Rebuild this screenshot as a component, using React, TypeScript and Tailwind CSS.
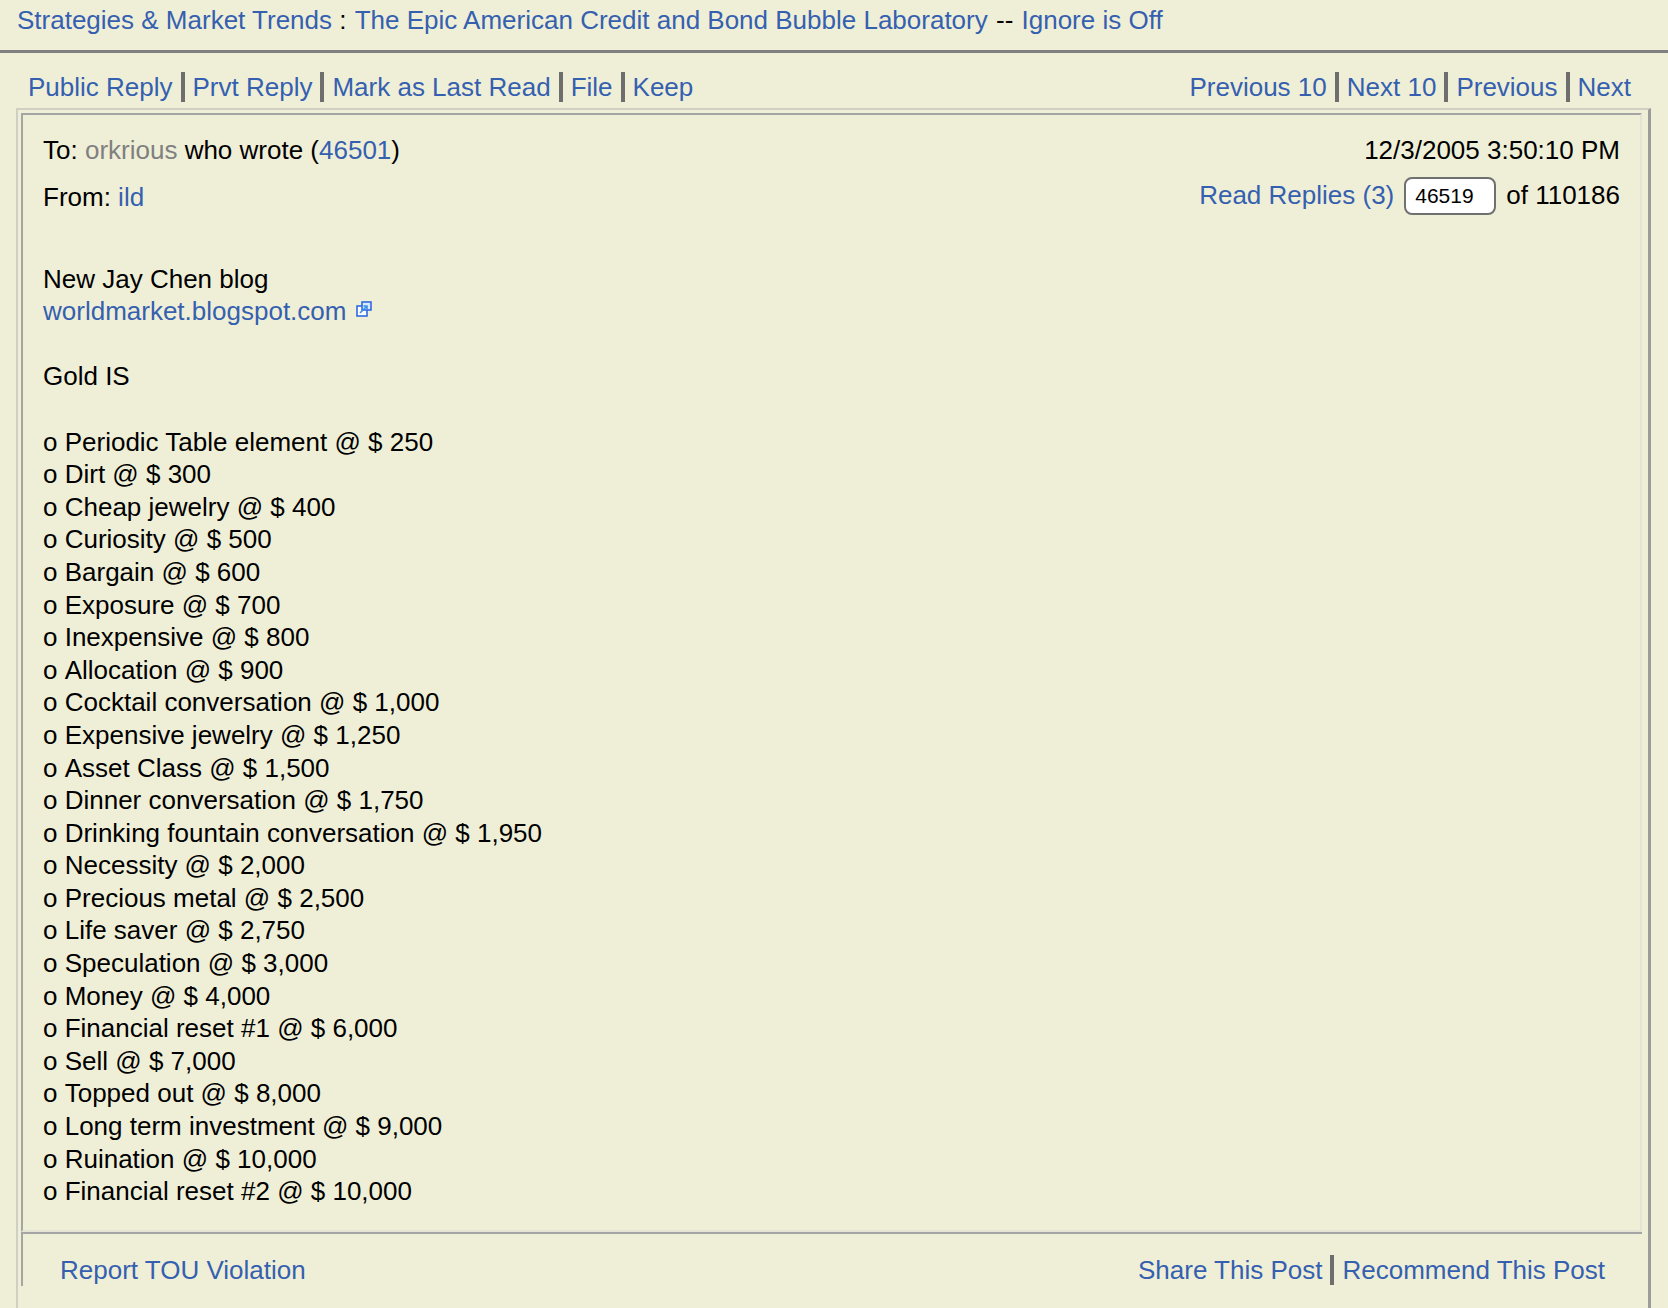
const items = [
	"Periodic Table element @ $ 250",
	"Dirt @ $ 300",
	"Cheap jewelry @ $ 400",
	"Curiosity @ $ 500",
	"Bargain @ $ 600",
	"Exposure @ $ 700",
	"Inexpensive @ $ 800",
	"Allocation @ $ 900",
	"Cocktail conversation @ $ 1,000",
	"Expensive jewelry @ $ 1,250",
	"Asset Class @ $ 1,500",
	"Dinner conversation @ $ 1,750",
	"Drinking fountain conversation @ $ 1,950",
	"Necessity @ $ 2,000",
	"Precious metal @ $ 2,500",
	"Life saver @ $ 2,750",
	"Speculation @ $ 3,000",
	"Money @ $ 4,000",
	"Financial reset #1 @ $ 6,000",
	"Sell @ $ 7,000",
	"Topped out @ $ 8,000",
	"Long term investment @ $ 9,000",
	"Ruination @ $ 10,000",
	"Financial reset #2 @ $ 10,000",
];

function A({ children }: { children: React.ReactNode }) {
	return <a className="text-[#3560b0]">{children}</a>;
}

function Links({ names }: { names: string[] }) {
	return (
		<div className="flex items-center">
			{names.map((name, i) => (
				<div key={name} className="flex items-center">
					{i > 0 && <span className="mx-[8px] h-[30px] w-[4px] bg-[#6e6e6e]" />}
					<A>{name}</A>
				</div>
			))}
		</div>
	);
}

function ExternalIcon() {
	return (
		<svg width="16" height="16" viewBox="0 0 16 16" className="ml-[10px] inline-block align-[3px]">
			<rect x="1" y="5" width="10" height="10" fill="#fff" stroke="#2f6be0" strokeWidth="1.6" />
			<rect x="6" y="1" width="9" height="8" fill="#dbe8fb" stroke="#2f6be0" strokeWidth="1.6" />
			<path d="M4 12 L10 6 M7.5 5 H11 V8.5" fill="none" stroke="#3f8fe8" strokeWidth="1.6" />
		</svg>
	);
}

export default function App() {
	return (
		<div className="h-[1308px] overflow-hidden bg-[#efefd7] font-['Liberation_Sans',Arial,sans-serif] text-[26px] leading-[32.6px] text-black">
			<div className="flex h-[53px] items-start whitespace-pre border-b-[3px] border-[#808080] pl-[17px] pt-[4px]">
				<A>Strategies &amp; Market Trends</A>
				<span className="mr-[1px]"> : </span>
				<A>The Epic American Credit and Bond Bubble Laboratory</A>
				<span className="mx-[1px]"> -- </span>
				<A>Ignore is Off</A>
			</div>

			<div className="flex h-[55px] items-center justify-between pl-[28px] pr-[37px] pt-[13px]">
				<Links names={["Public Reply", "Prvt Reply", "Mark as Last Read", "File", "Keep"]} />
				<Links names={["Previous 10", "Next 10", "Previous", "Next"]} />
			</div>

			<div className="ml-[16px] mr-[17px] border-l-[2px] border-r-[3px] border-t-[2px] border-l-[#cfcfc4] border-r-[#9c9c9c] border-t-[#cfcfc4] pb-[120px] pl-[3px] pr-[6px] pt-[3px]">
				<div className="border-l-[2px] border-r-[2px] border-b-[2px] border-t-[2px] border-l-[#a5a5a5] border-r-[#e4e4d4] border-b-[#e4e4d4] border-t-[#a5a5a5] pb-[22px] pl-[20px] pr-[20px] pt-[19px]">
					<div className="flex items-start justify-between">
						<div>
							<div>
								To: <span className="text-[#808080]">orkrious</span> who wrote (<A>46501</A>)
							</div>
							<div className="mt-[14px]">
								From: <A>ild</A>
							</div>
						</div>
						<div className="flex flex-col items-end">
							<div>12/3/2005 3:50:10 PM</div>
							<div className="mt-[10px] flex items-center">
								<A>Read Replies (3)</A>
								<input
									readOnly
									value="46519"
									className="mx-[10px] h-[38px] w-[92px] rounded-[8px] border-[2px] border-[#707070] bg-white pl-[9px] text-[21px] text-black outline-none"
								/>
								<span>of 110186</span>
							</div>
						</div>
					</div>

					<div className="mt-[48px]">
						<div>New Jay Chen blog</div>
						<div>
							<A>worldmarket.blogspot.com</A>
							<ExternalIcon />
						</div>
						<div className="h-[32.6px]" />
						<div>Gold IS</div>
						<div className="h-[32.6px]" />
						{items.map((item) => (
							<div key={item}>
								<span className="inline-block whitespace-pre">o </span>
								{item}
							</div>
						))}
					</div>
				</div>

				<div className="flex items-center justify-between border-l-[2px] border-t-[2px] border-l-[#a5a5a5] border-t-[#a5a5a5] pl-[37px] pr-[37px] pt-[20px]">
					<A>Report TOU Violation</A>
					<Links names={["Share This Post", "Recommend This Post"]} />
				</div>
			</div>
		</div>
	);
}
